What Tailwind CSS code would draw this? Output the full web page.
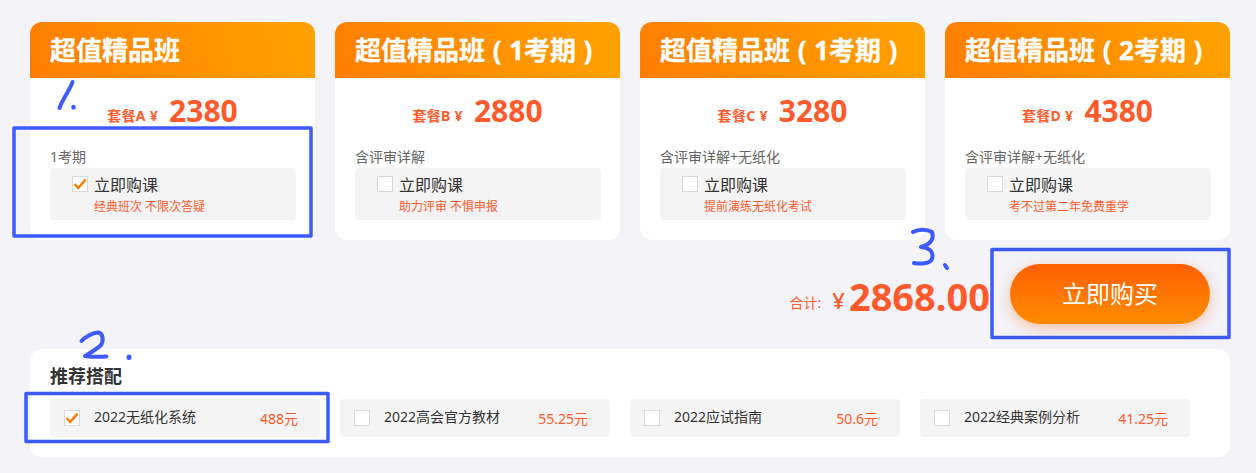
<!DOCTYPE html>
<html lang="zh">
<head>
<meta charset="utf-8">
<script src="https://cdn.jsdelivr.net/npm/@tailwindcss/browser@4"></script>
</head>
<body class="m-0 bg-[#f3f3f8] font-['Noto_Sans','Noto_Sans_CJK_SC',sans-serif]">
<div class="relative w-[1256px] h-[473px] overflow-hidden pl-[30px] pr-[26px] pt-[22px]">

  <div class="grid grid-cols-4 gap-5 w-[1200px]">
    <div class="h-[218px] rounded-xl bg-white overflow-hidden">
      <div class="h-14 px-5 flex items-center bg-[linear-gradient(75deg,#ff7e00,#ffa200)] text-white text-[26px] font-bold leading-none [-webkit-text-stroke:0.3px_white]">超值精品班</div>
      <div class="flex items-center justify-center h-[66px] gap-[11px]">
        <span class="text-[#ff5a2c] text-[14px] font-bold mt-2 tracking-[0.3px]">套餐A ¥</span><span class="text-[#ff5a2c] text-[30px] font-bold leading-none">2380</span>
      </div>
      <div class="px-5">
        <div class="text-[14px] leading-[16px] text-[#666] mt-[5px]">1考期</div>
        <div class="mt-[3px] w-[246px] h-[52px] rounded bg-[#f4f4f4] pl-[22px] pt-2 flex gap-[6px]">
          <span class="w-4 h-4 border border-[#d9d9d9] bg-white flex items-center justify-center shrink-0"><svg class="w-[14px] h-[14px]" viewBox="0 0 14 14" fill="none"><path d="M1.5 7 L5.2 11 L12.6 2.6" stroke="#ff7e00" stroke-width="2.4"/></svg></span>
          <div>
            <div class="text-[16px] leading-[19px] text-[#333]">立即购课</div>
            <div class="text-[12px] leading-[16px] mt-1 text-[#ff5a2c]">经典班次 不限次答疑</div>
          </div>
        </div>
      </div>
    </div>

    <div class="h-[218px] rounded-xl bg-white overflow-hidden">
      <div class="h-14 px-5 flex items-center bg-[linear-gradient(75deg,#ff7e00,#ffa200)] text-white text-[26px] font-bold leading-none whitespace-nowrap [-webkit-text-stroke:0.3px_white]">超值精品班<span class="w-[26px] text-center">(</span>1考期<span class="w-[26px] text-center">)</span></div>
      <div class="flex items-center justify-center h-[66px] gap-[11px]">
        <span class="text-[#ff5a2c] text-[14px] font-bold mt-2 tracking-[0.3px]">套餐B ¥</span><span class="text-[#ff5a2c] text-[30px] font-bold leading-none">2880</span>
      </div>
      <div class="px-5">
        <div class="text-[14px] leading-[16px] text-[#666] mt-[5px]">含评审详解</div>
        <div class="mt-[3px] w-[246px] h-[52px] rounded bg-[#f4f4f4] pl-[22px] pt-2 flex gap-[6px]">
          <span class="w-4 h-4 border border-[#d9d9d9] bg-white shrink-0"></span>
          <div>
            <div class="text-[16px] leading-[19px] text-[#333]">立即购课</div>
            <div class="text-[12px] leading-[16px] mt-1 text-[#ff5a2c]">助力评审 不惧申报</div>
          </div>
        </div>
      </div>
    </div>

    <div class="h-[218px] rounded-xl bg-white overflow-hidden">
      <div class="h-14 px-5 flex items-center bg-[linear-gradient(75deg,#ff7e00,#ffa200)] text-white text-[26px] font-bold leading-none whitespace-nowrap [-webkit-text-stroke:0.3px_white]">超值精品班<span class="w-[26px] text-center">(</span>1考期<span class="w-[26px] text-center">)</span></div>
      <div class="flex items-center justify-center h-[66px] gap-[11px]">
        <span class="text-[#ff5a2c] text-[14px] font-bold mt-2 tracking-[0.3px]">套餐C ¥</span><span class="text-[#ff5a2c] text-[30px] font-bold leading-none">3280</span>
      </div>
      <div class="px-5">
        <div class="text-[14px] leading-[16px] text-[#666] mt-[5px]">含评审详解+无纸化</div>
        <div class="mt-[3px] w-[246px] h-[52px] rounded bg-[#f4f4f4] pl-[22px] pt-2 flex gap-[6px]">
          <span class="w-4 h-4 border border-[#d9d9d9] bg-white shrink-0"></span>
          <div>
            <div class="text-[16px] leading-[19px] text-[#333]">立即购课</div>
            <div class="text-[12px] leading-[16px] mt-1 text-[#ff5a2c]">提前演练无纸化考试</div>
          </div>
        </div>
      </div>
    </div>

    <div class="h-[218px] rounded-xl bg-white overflow-hidden">
      <div class="h-14 px-5 flex items-center bg-[linear-gradient(75deg,#ff7e00,#ffa200)] text-white text-[26px] font-bold leading-none whitespace-nowrap [-webkit-text-stroke:0.3px_white]">超值精品班<span class="w-[26px] text-center">(</span>2考期<span class="w-[26px] text-center">)</span></div>
      <div class="flex items-center justify-center h-[66px] gap-[11px]">
        <span class="text-[#ff5a2c] text-[14px] font-bold mt-2 tracking-[0.3px]">套餐D ¥</span><span class="text-[#ff5a2c] text-[30px] font-bold leading-none">4380</span>
      </div>
      <div class="px-5">
        <div class="text-[14px] leading-[16px] text-[#666] mt-[5px]">含评审详解+无纸化</div>
        <div class="mt-[3px] w-[246px] h-[52px] rounded bg-[#f4f4f4] pl-[22px] pt-2 flex gap-[6px]">
          <span class="w-4 h-4 border border-[#d9d9d9] bg-white shrink-0"></span>
          <div>
            <div class="text-[16px] leading-[19px] text-[#333]">立即购课</div>
            <div class="text-[12px] leading-[16px] mt-1 text-[#ff5a2c]">考不过第二年免费重学</div>
          </div>
        </div>
      </div>
    </div>
  </div>

  <div class="mt-6 w-[1180px] h-[60px] flex items-center justify-end">
    <span class="text-[14px] text-[#ff5a2c] mt-[17px] mr-[11px]">合计:</span>
    <span class="text-[22px] font-medium text-[#ff5a2c] mt-[12px] mr-[4px]">¥</span>
    <span class="text-[38px] leading-none font-bold text-[#ff5a2c] mt-[4px]">2868.00</span>
    <button class="ml-5 w-[200px] h-[60px] rounded-full bg-gradient-to-b from-[#ff5e00] to-[#ff8c00] text-white text-[24px] shadow-[0_4px_14px_rgba(255,94,0,0.35)]">立即购买</button>
  </div>

  <div class="mt-[25px] w-[1200px] h-[108px] rounded-xl bg-white px-5 pt-[15px]">
    <div class="text-[18px] leading-[24px] font-bold text-[#333]">推荐搭配</div>
    <div class="mt-[11px] flex gap-5">
      <div class="w-[270px] h-[38px] rounded bg-[#f4f4f4] flex items-center pl-[14px] pr-[22px]">
        <span class="w-4 h-4 border border-[#d9d9d9] bg-white flex items-center justify-center shrink-0"><svg class="w-[14px] h-[14px]" viewBox="0 0 14 14" fill="none"><path d="M1.5 7 L5.2 11 L12.6 2.6" stroke="#ff7e00" stroke-width="2.4"/></svg></span>
        <span class="ml-[14px] text-[14px] leading-[20px] mb-[2px] text-[#333]">2022无纸化系统</span>
        <span class="ml-auto text-[14px] text-[#ff5a2c]">488元</span>
      </div>
      <div class="w-[270px] h-[38px] rounded bg-[#f4f4f4] flex items-center pl-[14px] pr-[22px]">
        <span class="w-4 h-4 border border-[#d9d9d9] bg-white shrink-0"></span>
        <span class="ml-[14px] text-[14px] leading-[20px] mb-[2px] text-[#333]">2022高会官方教材</span>
        <span class="ml-auto text-[14px] text-[#ff5a2c]">55.25元</span>
      </div>
      <div class="w-[270px] h-[38px] rounded bg-[#f4f4f4] flex items-center pl-[14px] pr-[22px]">
        <span class="w-4 h-4 border border-[#d9d9d9] bg-white shrink-0"></span>
        <span class="ml-[14px] text-[14px] leading-[20px] mb-[2px] text-[#333]">2022应试指南</span>
        <span class="ml-auto text-[14px] text-[#ff5a2c]">50.6元</span>
      </div>
      <div class="w-[270px] h-[38px] rounded bg-[#f4f4f4] flex items-center pl-[14px] pr-[22px]">
        <span class="w-4 h-4 border border-[#d9d9d9] bg-white shrink-0"></span>
        <span class="ml-[14px] text-[14px] leading-[20px] mb-[2px] text-[#333]">2022经典案例分析</span>
        <span class="ml-auto text-[14px] text-[#ff5a2c]">41.25元</span>
      </div>
    </div>
  </div>

  <svg class="absolute left-0 top-0 w-[1256px] h-[473px] pointer-events-none" viewBox="0 0 1256 473" fill="none" stroke="#3d5afe" stroke-linecap="round" stroke-linejoin="round">
    <rect x="14" y="128" width="297" height="108" stroke-width="3.5"/>
    <rect x="992" y="249.5" width="237" height="88" stroke-width="3.5"/>
    <rect x="26" y="393.5" width="302" height="48" stroke-width="3.5"/>
    <path d="M72.5 82 C70 90 63 98 59.5 108" stroke-width="4"/>
    <path d="M73.5 107 L73.5 107.5" stroke-width="4.5"/>
    <path d="M913 232 C918 229 927 229 932 232 C934 238 932 244 921 247 C930 248 934 252 932 259 C930 264 920 264 914 263" stroke-width="4"/>
    <path d="M945 265 L947 268" stroke-width="4"/>
    <path d="M81.5 341 C85 337 92 333 98 332.5 C103 333 104 340 101 345 C97 349 90 353 85 356 C92 357 100 357 106.5 356.5" stroke-width="4"/>
    <path d="M129 357 L129 357.5" stroke-width="5"/>
  </svg>
</div>
</body>
</html>
